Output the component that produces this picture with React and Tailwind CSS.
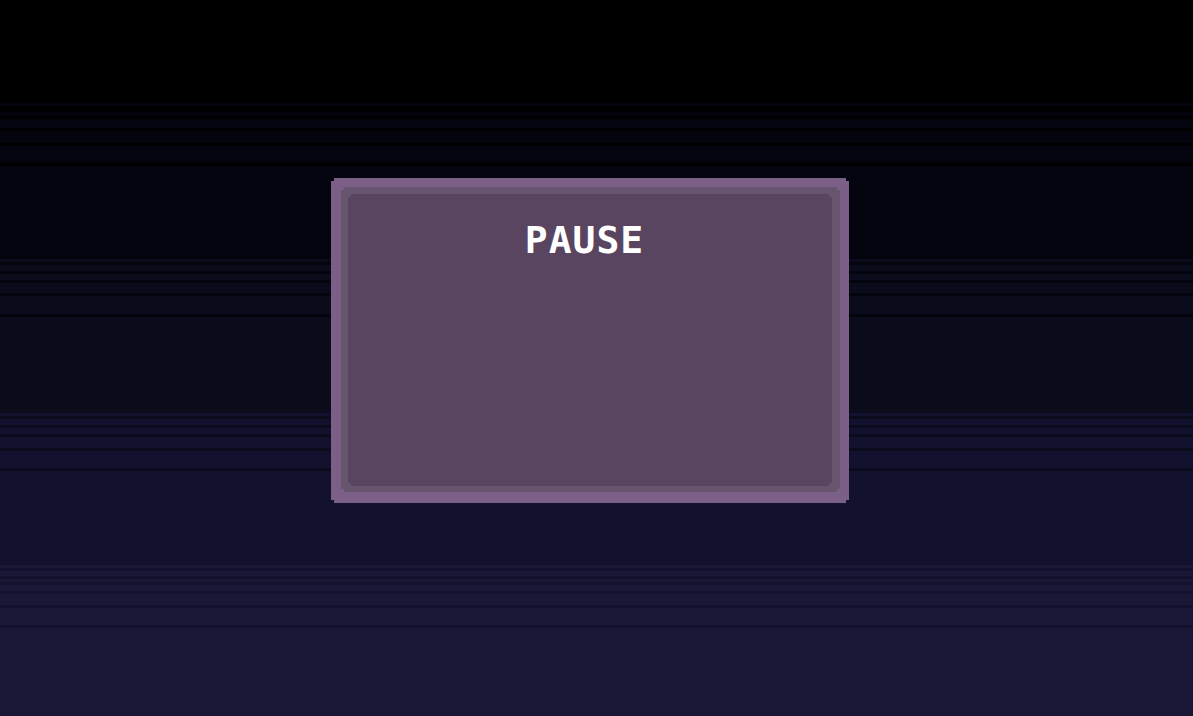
import React from 'react';

// background bands: each starts with dithered lines of the previous colour
const bands = [
  { color: 'bg-[#03040e]', line: 'bg-black', start: 103, end: 259, lines: [106, 109, 116, 128, 143, 163] },
  { color: 'bg-[#0a0c1c]', line: 'bg-[#03040e]', start: 259, end: 413, lines: [262, 271, 280, 293, 314] },
  { color: 'bg-[#12112e]', line: 'bg-[#0a0c1c]', start: 413, end: 565, lines: [416, 425, 434, 448, 468] },
  { color: 'bg-[#1a1736]', line: 'bg-[#12112e]', start: 565, end: 716, lines: [568, 576, 582, 591, 605, 625] },
];

function Band({ color, line, start, end, lines }) {
  return (
    <div className={`flex flex-col ${color}`} style={{ height: end - start }}>
      {lines.map((y, i) => {
        const prev = i === 0 ? start : lines[i - 1] + 3;
        return (
          <React.Fragment key={y}>
            <div className="shrink-0" style={{ height: y - prev }} />
            <div className={`shrink-0 h-[3px] ${line}`} />
          </React.Fragment>
        );
      })}
    </div>
  );
}

export default function App() {
  return (
    <div className="relative w-[1193px] h-[716px] overflow-hidden bg-black">
      <div className="flex flex-col">
        <div className="h-[103px] bg-black" />
        {bands.map((b) => (
          <Band key={b.start} {...b} />
        ))}
      </div>

      {/* pause panel */}
      <div className="absolute left-[331px] top-[178px] w-[518px] h-[325px] flex flex-col bg-[#7b5f86] pt-[9px] pl-[10px] pr-[9px] pb-[11px] [clip-path:polygon(3px_0,calc(100%-3px)_0,calc(100%-3px)_3px,100%_3px,100%_calc(100%-3px),calc(100%-3px)_calc(100%-3px),calc(100%-3px)_100%,3px_100%,3px_calc(100%-3px),0_calc(100%-3px),0_3px,3px_3px)]">
        <div className="flex-1 flex flex-col bg-[#675570] pt-[7px] pl-[7px] pr-[8px] pb-[6px] [clip-path:polygon(3px_0,calc(100%-3px)_0,calc(100%-3px)_3px,100%_3px,100%_calc(100%-3px),calc(100%-3px)_calc(100%-3px),calc(100%-3px)_100%,3px_100%,3px_calc(100%-3px),0_calc(100%-3px),0_3px,3px_3px)]">
          <div className="flex-1 flex flex-col items-center bg-[#5a4560] pr-[11px] [clip-path:polygon(3px_0,calc(100%-3px)_0,calc(100%-3px)_3px,100%_3px,100%_calc(100%-3px),calc(100%-3px)_calc(100%-3px),calc(100%-3px)_100%,3px_100%,3px_calc(100%-3px),0_calc(100%-3px),0_3px,3px_3px)]">
            <h1 className="mt-[27px] font-['DejaVu_Sans_Mono',monospace] font-bold text-[38px] leading-none tracking-[1px] text-white">
              PAUSE
            </h1>
          </div>
        </div>
      </div>
    </div>
  );
}
